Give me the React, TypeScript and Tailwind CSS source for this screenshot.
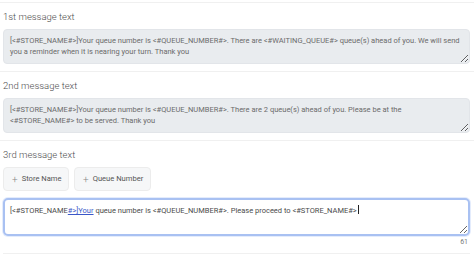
import React from "react";

interface Section {
  label: string;
  lines: string[];
}

const sections: Section[] = [
  {
    label: "1st message text",
    lines: [
      "[<#STORE_NAME#>]Your queue number is <#QUEUE_NUMBER#>. There are <#WAITING_QUEUE#> queue(s) ahead of you. We will send",
      "you a reminder when it is nearing your turn. Thank you",
    ],
  },
  {
    label: "2nd message text",
    lines: [
      "[<#STORE_NAME#>]Your queue number is <#QUEUE_NUMBER#>. There are 2 queue(s) ahead of you. Please be at the",
      "<#STORE_NAME#> to be served. Thank you",
    ],
  },
];

function Label({ children }: { children: React.ReactNode }) {
  return <div className="mb-[5px] h-[14px] text-[9.5px] font-light leading-[14px] text-[#4f4f4f]">{children}</div>;
}

export default function App() {
  return (
    <div
      className="h-[256px] w-[474px] overflow-hidden bg-white"
      style={{ fontFamily: "Roboto, 'Liberation Sans', sans-serif" }}
    >
      <div className="mt-[2px]">
        {sections.map((s) => (
          <div key={s.label} className="border-t border-[#f0f0f0] pb-[7px] pl-[3px] pr-[4px] pt-[7px]">
            <Label>{s.label}</Label>
            <div className="h-[35px] resize-y overflow-hidden whitespace-pre rounded-[4px] border border-[#e2e5e9] bg-[#e9ecef] px-[6px] pt-[5px] text-[7.5px] leading-[11px] text-[#6b6b6b]">
              {s.lines.join("\n")}
            </div>
          </div>
        ))}

        <div className="border-t border-[#f0f0f0] pl-[3px] pr-[4px] pt-[7px]">
          <Label>3rd message text</Label>
          <div className="mb-[7px] flex gap-[5px]">
            <button className="flex h-[24px] w-[66px] items-center gap-[4px] whitespace-nowrap rounded-[4px] border border-[#ececec] bg-[#f6f7f8] px-[8px] text-[7.6px] text-[#555]">
              <span className="text-[10px] font-light text-[#888]">+</span>
              Store Name
            </button>
            <button className="flex h-[24px] w-[77px] items-center gap-[4px] whitespace-nowrap rounded-[4px] border border-[#ececec] bg-[#f6f7f8] px-[8px] text-[7.6px] text-[#555]">
              <span className="text-[10px] font-light text-[#888]">+</span>
              Queue Number
            </button>
          </div>
          <div className="h-[38px] resize-y overflow-hidden rounded-[5px] border-2 border-[#a9c1f2] bg-white px-[5px] pt-[4px] text-[7.5px] leading-[11px] text-[#4a4a4a] shadow-[0_0_0_1px_#e4ecfc]">
            [&lt;#STORE_NAME
            <span className="text-[#3a57c8] underline decoration-[#3a57c8]">#&gt;]Your</span> queue number is
            &lt;#QUEUE_NUMBER#&gt;. Please proceed to &lt;#STORE_NAME#&gt;
            <span className="ml-px inline-block h-[9px] w-px translate-y-[1px] bg-[#222]" />
          </div>
          <div className="mt-[2px] pr-[2px] text-right text-[7px] leading-[9px] text-[#777]">61</div>
          <div className="mt-[6px] border-t border-[#f0f0f0]" />
        </div>
      </div>
    </div>
  );
}
